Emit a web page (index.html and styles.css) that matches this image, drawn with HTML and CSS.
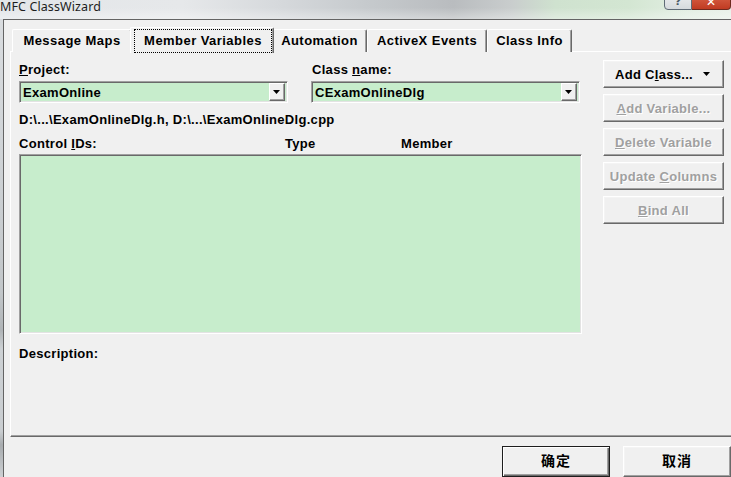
FILE: index.html
```html
<!DOCTYPE html>
<html>
<head>
<meta charset="utf-8">
<title>MFC ClassWizard</title>
<link rel="stylesheet" href="styles.css">
</head>
<body>
<div class="window">
  <div class="titlebar">
    <span class="title">MFC ClassWizard</span>
    <div class="caption">
      <span class="cap-btn help">?</span>
      <span class="cap-btn close">✕</span>
    </div>
  </div>
  <div class="frame">
    <div class="frame-edge"></div>
    <div class="client">
      <div class="tabs">
        <div class="tab t1">Message Maps</div>
        <div class="tab t2 sel"><span class="focus">Member Variables</span></div>
        <div class="tab t3">Automation</div>
        <div class="tab t4">ActiveX Events</div>
        <div class="tab t5">Class Info</div>
      </div>
      <div class="panel">
        <div class="main">
          <div class="fields">
            <div class="field">
              <div class="label"><u>P</u>roject:</div>
              <div class="combo">
                <span class="combo-text">ExamOnline</span>
                <span class="drop"><svg width="7" height="4" viewBox="0 0 7 4"><polygon points="0,0 7,0 3.5,4" fill="#000"/></svg></span>
              </div>
            </div>
            <div class="field">
              <div class="label lbl2">Class <u>n</u>ame:</div>
              <div class="combo">
                <span class="combo-text">CExamOnlineDlg</span>
                <span class="drop"><svg width="7" height="4" viewBox="0 0 7 4"><polygon points="0,0 7,0 3.5,4" fill="#000"/></svg></span>
              </div>
            </div>
          </div>
          <div class="path">D:\...\ExamOnlineDlg.h, D:\...\ExamOnlineDlg.cpp</div>
          <div class="cols">
            <span>Control <u>I</u>Ds:</span>
            <span>Type</span>
            <span>Member</span>
          </div>
          <div class="list"></div>
          <div class="desc">Description:</div>
        </div>
        <div class="side">
          <div class="btn add-class"><span>Add C<u>l</u>ass...</span><svg class="arr" width="7" height="4" viewBox="0 0 7 4"><polygon points="0,0 7,0 3.5,4" fill="#000"/></svg></div>
          <div class="btn dis"><span><u>A</u>dd Variable...</span></div>
          <div class="btn dis"><span><u>D</u>elete Variable</span></div>
          <div class="btn dis"><span>Update <u>C</u>olumns</span></div>
          <div class="btn dis"><span><u>B</u>ind All</span></div>
        </div>
      </div>
      <div class="footer">
        <div class="btn big default">确定</div>
        <div class="btn big">取消</div>
      </div>
    </div>
  </div>
</div>
</body>
</html>
```

FILE: styles.css
```css
* { box-sizing: border-box; }
html, body { margin: 0; padding: 0; }
body {
  width: 731px;
  height: 477px;
  overflow: hidden;
  background: #f0f0f0;
  font-family: "Liberation Sans", Arial, sans-serif;
  color: #000;
}
.window { width: 731px; height: 477px; display: flex; flex-direction: column; overflow: hidden; }

/* title bar (aero glass look) */
.titlebar {
  height: 19px;
  flex: none;
  display: flex;
  align-items: flex-start;
  background:
    linear-gradient(180deg, rgba(255,255,255,0) 40%, rgba(255,255,255,0.35) 100%),
    linear-gradient(90deg, #e3e6e9 0%, #e6e8ea 25%, #d6d9dc 38%, #c6cacd 50%, #b9bcbf 62%, #c9cdcd 70%, #cfe2cf 76%, #d3e6d2 86%, #e2eee2 94%, #e8f0e8 100%);
}
.title {
  font-family: "Noto Sans", "Open Sans", sans-serif;
  font-size: 12.5px;
  line-height: 13px;
  color: #1e1e1e;
  margin-top: 0;
  letter-spacing: 0.1px;
}
.caption { margin-left: auto; display: flex; margin-top: -11px; }
.cap-btn {
  height: 21px;
  display: flex;
  align-items: flex-end;
  justify-content: center;
  font-family: "DejaVu Sans", sans-serif;
  font-weight: bold;
  line-height: 14px;
}
.help {
  width: 28px;
  border: 1px solid #5f6b76;
  border-radius: 0 0 0 4px;
  background: linear-gradient(#f3f4f5, #d6dadd);
  color: #4c5966;
  font-size: 11px;
}
.close {
  width: 39px;
  border: 1px solid #6e2a1f;
  border-left: none;
  border-radius: 0 0 4px 0;
  background: linear-gradient(#e9a08b, #d0553b 50%, #c03b22);
  color: #fff;
  font-size: 12px;
}

/* frame */
.frame { flex: 1; display: flex; min-height: 0; min-width: 0; }
.frame-edge {
  width: 3px;
  flex: none;
  background: linear-gradient(180deg, #d9dcdf 0%, #cfd3d6 30%, #c2c6c9 60%, #b0b4b7 68%, #cdd1d4 72%, #c9cdd0 90%, #a8acaf 93%, #cdd0d3 100%);
}
.client {
  flex: 1;
  min-width: 0;
  overflow: hidden;
  border-top: 1px solid #646464;
  border-left: 1px solid #646464;
  padding: 7px 0 0 6px;
  display: flex;
  flex-direction: column;
}

/* tabs */
.tabs {
  display: flex;
  align-items: flex-start;
  height: 25px;
  padding-left: 2px;
  position: relative;
  z-index: 1;
  margin-bottom: -1px;
  font-size: 13px;
  font-weight: bold;
  letter-spacing: 0.45px;
}
.tab {
  height: 23px;
  margin-top: 2px;
  flex: none;
  border-top: 1px solid #fff;
  border-left: 1px solid #fff;
  border-right: 1px solid #696969;
  box-shadow: inset -1px 0 #a0a0a0;
  border-radius: 2px 2px 0 0;
  display: flex;
  justify-content: center;
  padding-top: 3px;
  line-height: 15px;
  white-space: nowrap;
  background: #f0f0f0;
}
.t1 { width: 120px; }
.t2 { width: 144px; }
.t3 { width: 95px; }
.t4 { width: 120px; }
.t5 { width: 85px; }
.tab.sel {
  height: 26px;
  margin: 0 -2px;
  position: relative;
  z-index: 2;
  padding: 1px 1px 0 3px;
}
.focus {
  flex: 1;
  border: 1px dotted #000;
  text-align: center;
  padding-top: 3px;
  height: 24px;
}

/* panel */
.panel {
  width: 740px;
  height: 386px;
  flex: none;
  border-top: 1px solid #fff;
  border-left: 1px solid #fff;
  border-bottom: 1px solid #696969;
  box-shadow: inset 0 -1px #a0a0a0;
  display: flex;
  align-items: flex-start;
  padding: 10px 0 0 8px;
  font-size: 13px;
  font-weight: bold;
  line-height: 15px;
  letter-spacing: 0.3px;
}
.main { width: 563px; flex: none; display: flex; flex-direction: column; }
.fields { display: grid; grid-template-columns: 269px 269px; column-gap: 23px; }
.label { height: 15px; }
.lbl2 { padding-left: 1px; }
.combo {
  margin-top: 4px;
  height: 22px;
  background: #c7edcc;
  border: 1px solid;
  border-color: #a0a0a0 #fff #fff #a0a0a0;
  box-shadow: inset 1px 1px #696969, inset -1px -1px #e3e3e3;
  display: flex;
  align-items: center;
  padding: 2px 2px 2px 3px;
}
.combo-text { flex: 1; padding-top: 1px; }
.drop {
  width: 16px;
  height: 18px;
  background: #f0f0f0;
  border: 1px solid;
  border-color: #fff #696969 #696969 #fff;
  box-shadow: inset -1px -1px #a0a0a0;
  display: flex;
  align-items: center;
  justify-content: center;
}
.drop svg { display: block; margin-left: -1px; }
.path { margin-top: 9px; }
.cols {
  margin-top: 9px;
  display: grid;
  grid-template-columns: 266px 116px auto;
}
.list {
  margin-top: 3px;
  height: 180px;
  background: #c7edcc;
  border: 1px solid;
  border-color: #a0a0a0 #fff #fff #a0a0a0;
  box-shadow: inset 1px 1px #696969, inset -1px -1px #e3e3e3;
}
.desc { margin-top: 12px; }

/* buttons */
.side {
  margin-left: 21px;
  margin-top: -2px;
  width: 121px;
  display: flex;
  flex-direction: column;
  gap: 6px;
}
.btn {
  height: 28px;
  background: #f0f0f0;
  border: 1px solid;
  border-color: #fff #696969 #696969 #fff;
  box-shadow: inset -1px -1px #a0a0a0, inset 1px 1px #f4f4f4;
  display: flex;
  align-items: center;
  justify-content: center;
  white-space: nowrap;
}
.add-class { justify-content: flex-start; padding: 0 13px 0 11px; }
.add-class .arr { margin-left: auto; display: block; }
.dis { color: #a0a0a0; text-shadow: 1px 1px #fff; }

.footer {
  display: flex;
  justify-content: flex-end;
  gap: 13px;
  padding-top: 9px;
}
.big {
  width: 108px;
  height: 31px;
  flex: none;
  padding-bottom: 3px;
  font-family: "Noto Sans CJK SC", "Noto Sans CJK TC", sans-serif;
  font-weight: bold;
  font-size: 14px;
  letter-spacing: 1px;
}
.default {
  border: 1px solid #1e1e1e;
  box-shadow: inset 1px 1px #fff, inset -1px -1px #696969, inset -2px -2px #a0a0a0;
}
```
